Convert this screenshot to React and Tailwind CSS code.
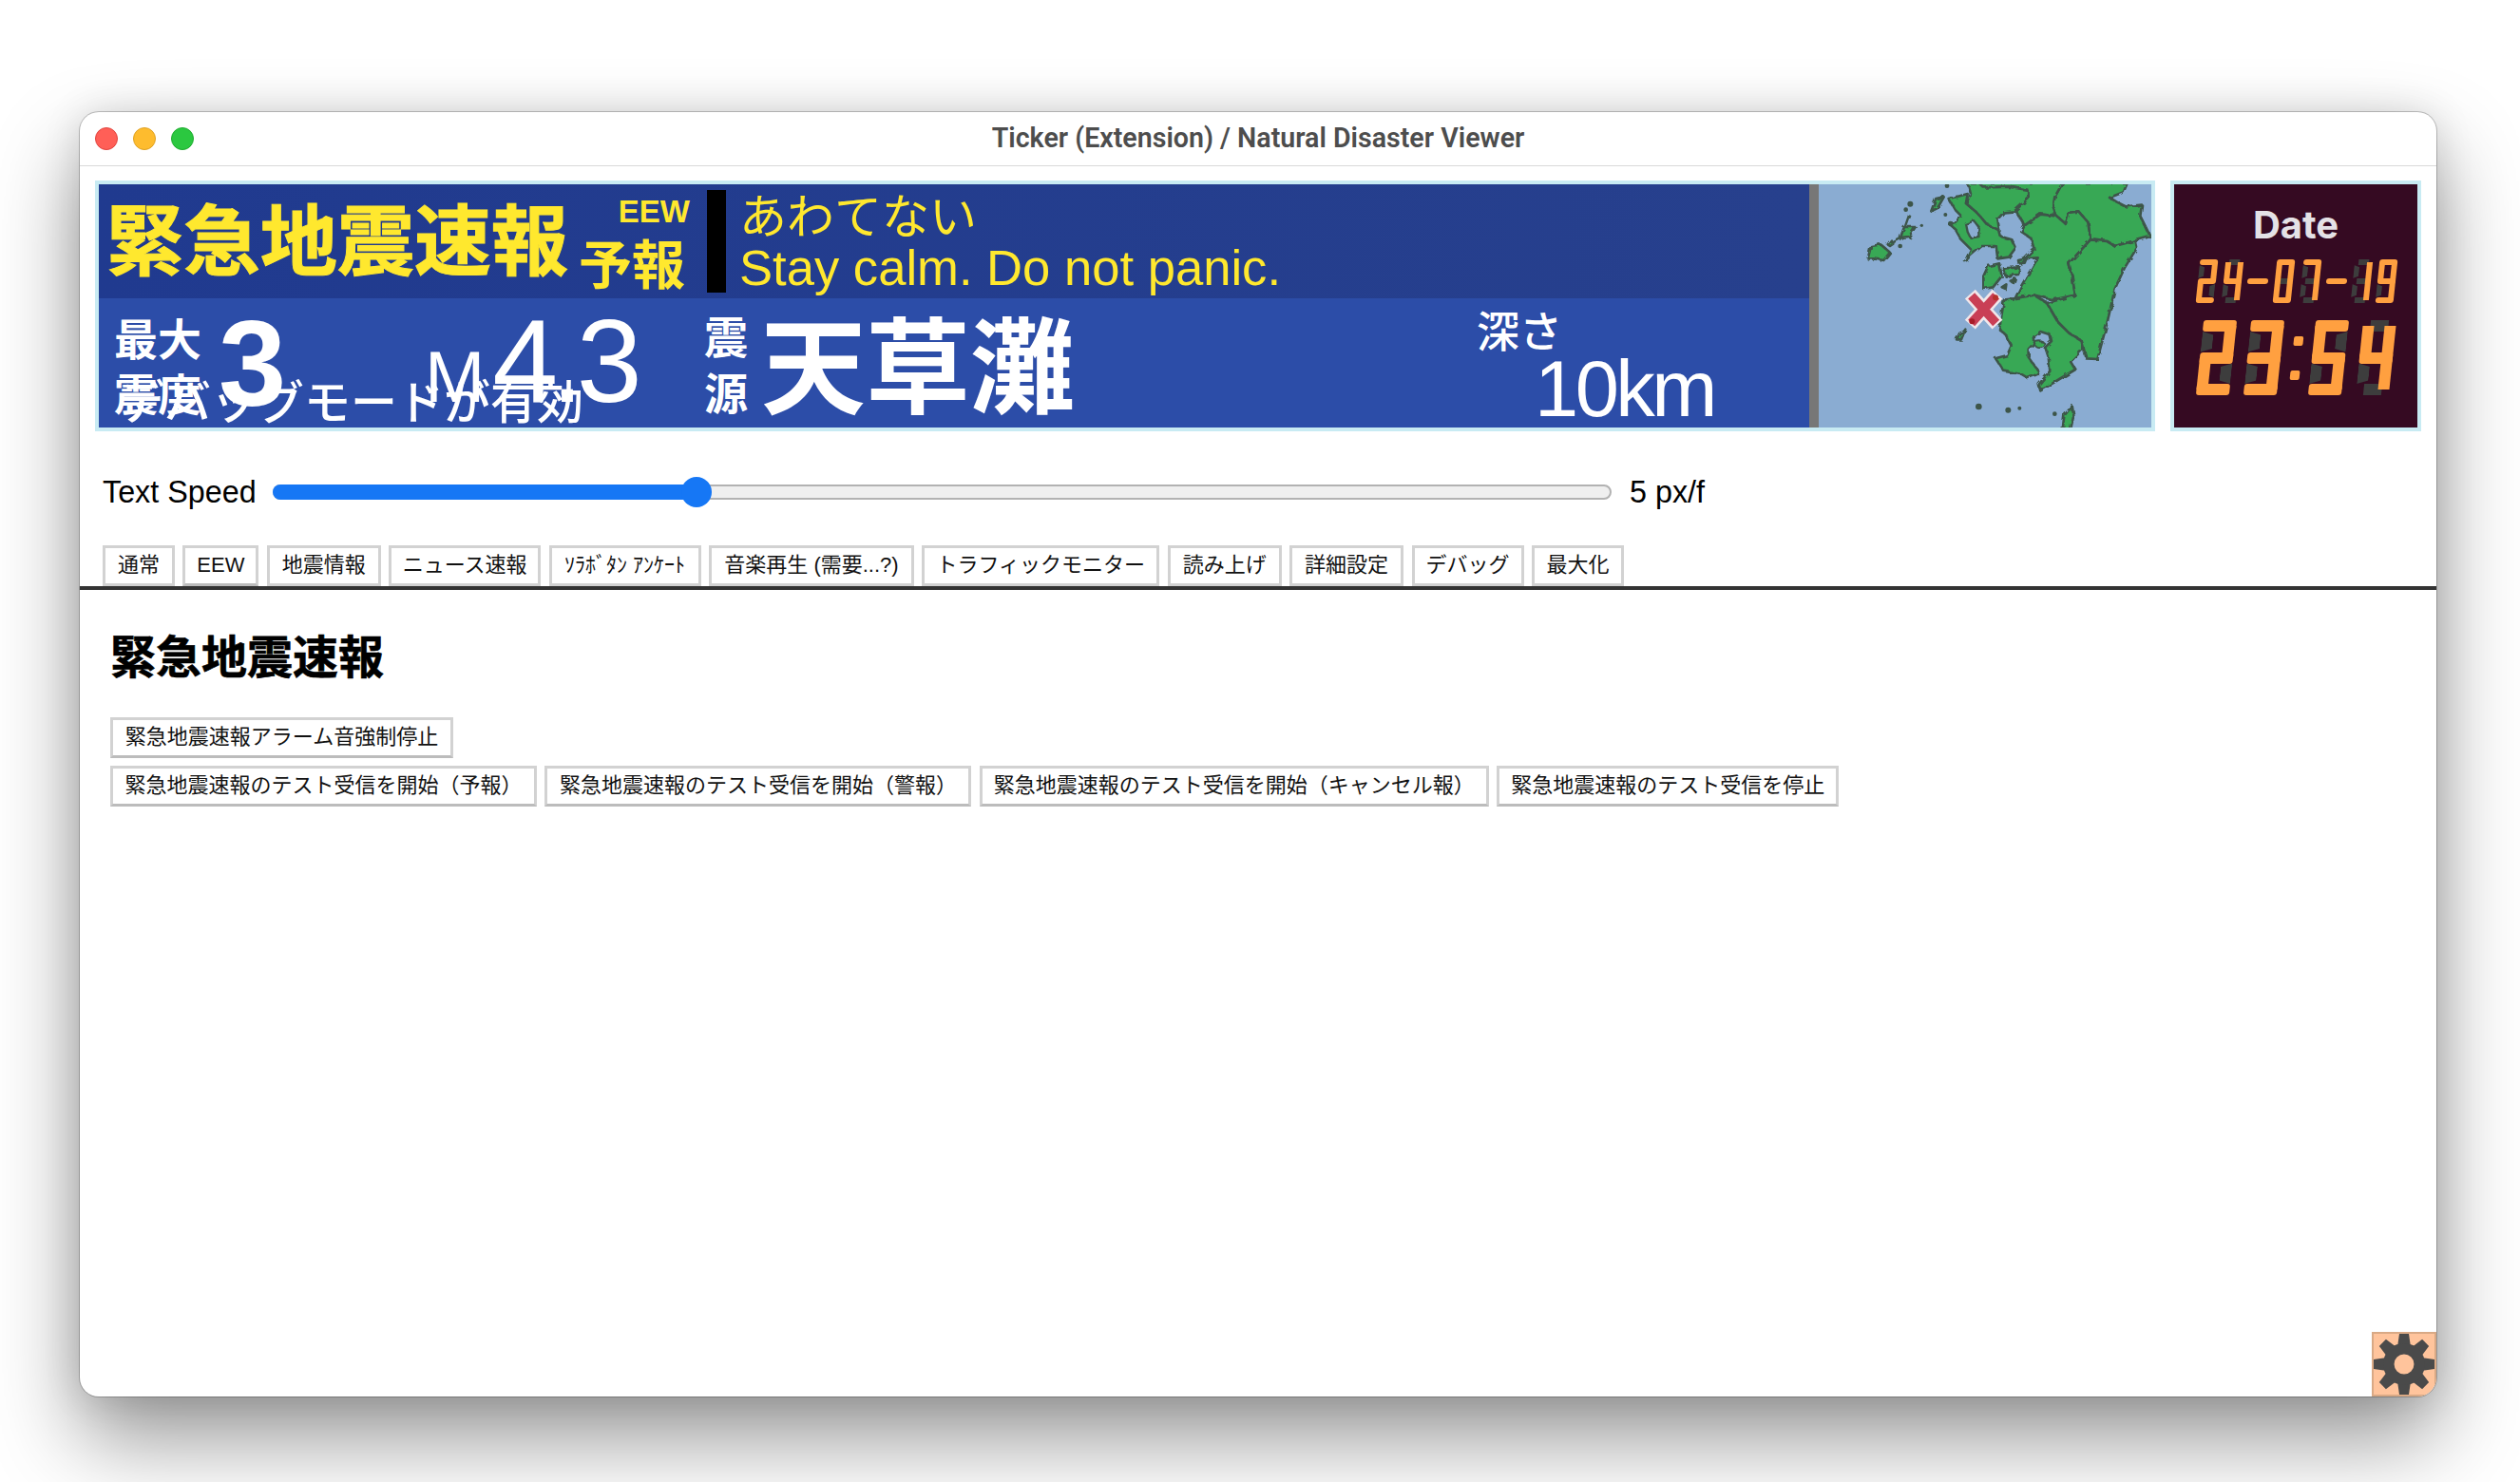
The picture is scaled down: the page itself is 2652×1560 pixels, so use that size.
import React from 'react';

const TABS = [
  { label: '通常', w: 'w-[76px]' },
  { label: 'EEW', w: 'w-[80px]', active: true },
  { label: '地震情報', w: 'w-[120px]' },
  { label: 'ニュース速報', w: 'w-[160px]' },
  { label: 'ｿﾗﾎﾞﾀﾝ ｱﾝｹｰﾄ', w: 'w-[160px]' },
  { label: '音楽再生 (需要...?)', w: 'w-[216px]' },
  { label: 'トラフィックモニター', w: 'w-[250px]' },
  { label: '読み上げ', w: 'w-[120px]' },
  { label: '詳細設定', w: 'w-[120px]' },
  { label: 'デバッグ', w: 'w-[118px]' },
  { label: '最大化', w: 'w-[97px]' },
];

// a,b,c,d,e,f,g segments
const SEGMENTS = {
  0: 'abcdef',
  1: 'bc',
  2: 'abged',
  3: 'abgcd',
  4: 'fgbc',
  5: 'afgcd',
  7: 'abc',
  9: 'abcdfg',
};

const Digit = ({ value, big }) => {
  const s = SEGMENTS[value];
  const box = big ? 'w-[35px] h-[79px]' : 'w-[19px] h-[46px]';
  const bar = (on) => `${big ? 'h-[12px]' : 'h-[6px]'} ${on ? 'bg-[#ffa040] rounded-[3px]' : `bg-[#3d3d3d] ${big ? 'mx-[8px]' : 'mx-[4px]'}`}`;
  const side = (on, clip) =>
    `${big ? 'w-[12px]' : 'w-[6px]'} ${on ? `bg-[#ffa040] relative z-10 ${big ? '-my-[6px]' : '-my-[3px]'}` : `bg-[#3d3d3d] ${clip}`}`;
  const left = '[clip-path:polygon(0_0,100%_16%,100%_84%,0_100%)]';
  const right = '[clip-path:polygon(0_16%,100%_0,100%_100%,0_84%)]';
  return (
    <div className={`flex flex-col shrink-0 ${box}`} aria-label={String(value)}>
      <div className={bar(s.includes('a'))} />
      <div className="flex-1 flex justify-between">
        <div className={side(s.includes('f'), left)} />
        <div className={side(s.includes('b'), right)} />
      </div>
      <div className={bar(s.includes('g'))} />
      <div className="flex-1 flex justify-between">
        <div className={side(s.includes('e'), left)} />
        <div className={side(s.includes('c'), right)} />
      </div>
      <div className={bar(s.includes('d'))} />
    </div>
  );
};

const Dash = () => <div className="w-[22px] h-[6px] rounded-full bg-[#ffa040] shrink-0" />;

const Clock = () => (
  <div className="w-[264px] h-[264px] border-4 border-[#c8ebf3] bg-[#350a22] flex flex-col items-center">
    <div className="mt-[23px] h-[40px] text-[40px] leading-[40px] font-bold text-[#e4e2e6] font-['Inter',sans-serif]">Date</div>
    <div className="mt-[16px] -skew-x-6 flex items-center justify-center h-[46px] w-[207px]">
      <Digit value={2} /><div className="w-[8px] shrink-0" /><Digit value={4} />
      <div className="w-[6px] shrink-0" /><Dash /><div className="w-[7px] shrink-0" />
      <Digit value={0} /><div className="w-[9px] shrink-0" /><Digit value={7} />
      <div className="w-[7px] shrink-0" /><Dash /><div className="w-[6px] shrink-0" />
      <Digit value={1} /><div className="w-[7px] shrink-0" /><Digit value={9} />
    </div>
    <div className="mt-[18px] -skew-x-6 flex items-center h-[79px] w-[203px]">
      <Digit value={2} big /><div className="w-[15px] shrink-0" /><Digit value={3} big />
      <div className="w-[33px] flex flex-col items-center gap-[26px] shrink-0">
        <div className="w-[10px] h-[10px] bg-[#ffa040] rounded-[2px]" />
        <div className="w-[10px] h-[10px] bg-[#ffa040] rounded-[2px]" />
      </div>
      <Digit value={5} big /><div className="w-[15px] shrink-0" /><Digit value={4} big />
    </div>
  </div>
);

const KyushuMap = () => {
  const land = 'fill-[#38a855] stroke-[#3d5549]';
  const water = 'fill-[#8aacd2] stroke-[#3d5549]';
  const polys = [
    // oita
    '770,-5 745,40 740,70 750,100 780,125 790,90 820,85 850,120 858,175 910,180 935,195 1000,178 1047,165 1030,130 1015,100 1020,65 970,70 940,55 918,42 962,25 975,-5',
    // fukuoka
    '505,-5 520,10 600,8 660,18 662,45 620,80 650,130 700,95 750,100 740,70 745,40 770,-5',
    // nagasaki
    '410,45 440,38 470,30 465,60 500,90 530,125 570,145 575,165 610,175 622,200 600,230 565,235 560,195 515,195 480,225 462,243 480,205 450,175 430,140 412,125 430,120 450,100 430,80',
    // saga
    '470,-5 480,30 465,60 500,90 530,125 570,145 565,110 585,88 618,85 662,45 660,18 600,8 520,10 505,-5',
    // kumamoto
    '650,130 700,95 750,100 780,125 790,90 820,85 850,120 858,175 790,250 800,290 810,350 740,365 680,350 620,360 640,320 692,232 650,235 680,205 670,170 640,150',
    // miyazaki
    '858,175 910,180 935,195 1000,178 1005,200 965,265 935,330 910,440 880,552 845,550 830,495 790,470 755,435 720,375 810,350 800,290 790,250',
    // kagoshima
    '585,365 620,360 680,350 720,375 755,435 790,470 830,495 835,520 795,560 810,585 760,615 700,652 695,632 730,590 725,545 715,515 735,495 730,475 700,465 680,480 682,500 662,520 662,545 690,585 690,600 660,612 640,600 585,590 558,550 595,540 608,510 590,475 570,458',
    // amakusa
    '520,330 520,290 535,258 570,250 578,290 550,325',
    '585,265 635,262 630,285 590,290',
    '630,240 655,235 650,248 632,250',
    '578,325 592,316 590,330',
    '605,305 620,298 615,312',
    // koshiki
    '435,490 445,470 460,465 450,490',
    // goto
    '155,235 165,195 195,190 225,215 205,240 175,235',
    '218,190 228,176 235,188 225,195',
    '258,168 270,135 305,135 285,165',
    // hirado
    '355,85 370,45 395,40 375,75',
    // tanegashima
    '770,775 775,730 800,700 805,730 795,775',
  ];
  return (
    <svg viewBox="0 0 1050 768" className="w-[350px] h-[256px] bg-[#8aacd2] blur-[0.6px] shrink-0">
      <defs>
        <filter id="rough" x="-5%" y="-5%" width="110%" height="110%">
          <feTurbulence type="fractalNoise" baseFrequency="0.05" numOctaves="2" seed="4" />
          <feDisplacementMap in="SourceGraphic" scale="14" />
        </filter>
      </defs>
      <g filter="url(#rough)">
        {polys.map((p) => (
          <polygon key={p} points={p} className={land} strokeWidth="8" strokeLinejoin="round" />
        ))}
        <polygon points="465,125 490,115 505,135 505,165 480,170 470,150" className={water} strokeWidth="7" />
        <ellipse cx="697" cy="505" rx="16" ry="9" className={land} strokeWidth="6" />
        <path d="M286 95 L272 135 M262 170 L232 185 M465 455 L455 468" stroke="#3d5549" strokeWidth="7" fill="none" />
      </g>
      {[[289, 62, 9], [275, 80, 7], [325, 130, 5], [257, 195, 7], [400, 96, 6], [405, 5, 7], [416, 124, 8], [505, 702, 10], [598, 713, 9], [634, 707, 6], [745, 725, 7]].map(([cx, cy, r]) => (
        <circle key={`${cx}-${cy}`} cx={cx} cy={cy} r={r} fill="#3d5549" />
      ))}
      <path d="M478 347 L564 443 M564 347 L478 443" stroke="#f1e7ea" strokeWidth="44" fill="none" />
      <path d="M482 352 L560 438 M560 352 L482 438" stroke="#c93f55" strokeWidth="28" fill="none" />
      <circle cx="558" cy="358" r="9" fill="#b5322c" />
      <circle cx="484" cy="433" r="9" fill="#a81c28" />
    </svg>
  );
};

const Ticker = () => (
  <div className="w-[2168px] h-[264px] border-4 border-[#c8ebf3] flex">
    <div className="w-[1800px] h-[256px] flex flex-col font-['Liberation_Sans','Noto_Sans_CJK_JP',sans-serif]">
      <div className="h-[120px] bg-linear-to-r from-[#203a8f] to-[#27408d] flex items-center pl-[8px] text-[#ffe82e] font-['Noto_Sans_CJK_JP',sans-serif]">
        <div className="w-[492px] mb-[14px] text-[81px] leading-none font-bold whitespace-nowrap [-webkit-text-stroke:1px_#ffe82e]">緊急地震速報</div>
        <div className="ml-[6px] w-[116px] flex flex-col items-end">
          <div className="text-[33px] leading-[34px] font-bold font-['Liberation_Sans',sans-serif]">EEW</div>
          <div className="mt-[7px] mr-[5px] text-[56px] leading-none font-bold whitespace-nowrap">予報</div>
        </div>
        <div className="ml-[18px] w-[20px] h-[108px] bg-black" />
        <div className="ml-[14px] flex flex-col">
          <div className="-mt-[2px] text-[50px] leading-[56px] whitespace-nowrap">あわてない</div>
          <div className="mt-[2px] text-[52.6px] leading-[56px] whitespace-nowrap font-['Liberation_Sans',sans-serif]">Stay calm. Do not panic.</div>
        </div>
      </div>
      <div className="relative h-[136px] bg-[#2c4da8] flex text-white pl-[16px]">
        <div className="w-[110px] pt-[11px] text-[46px] leading-[58px] font-bold font-['Noto_Sans_CJK_JP',sans-serif]">
          <div>最大</div>
          <div>震度</div>
        </div>
        <div className="w-[217px] pt-[1px] text-[128px] leading-[136px] font-bold">3</div>
        <div className="w-[294px] flex items-baseline pt-[2px]">
          <span className="text-[76px] leading-[128px]">M</span>
          <span className="ml-[8px] text-[124px] leading-[128px] tracking-[-7.5px]">4.3</span>
        </div>
        <div className="w-[60px] pt-[9px] text-[46px] leading-[59px] font-bold font-['Noto_Sans_CJK_JP',sans-serif]">
          <div>震</div>
          <div>源</div>
        </div>
        <div className="w-[753px] pt-[10px] text-[110px] leading-[110px] font-bold font-['Noto_Sans_CJK_JP',sans-serif]">天草灘</div>
        <div className="flex flex-col">
          <div className="pt-[8px] text-[45px] leading-[50px] font-medium font-['Noto_Sans_CJK_JP',sans-serif]">深さ</div>
          <div className="ml-[61px] text-[83px] leading-[76px] tracking-[-3.5px] whitespace-nowrap">10km</div>
        </div>
        <div className="absolute left-[20px] top-[78px] text-[49px] leading-[56px] whitespace-nowrap text-white font-medium font-['Noto_Sans_CJK_JP',sans-serif]">デバッグモードが有効</div>
      </div>
    </div>
    <div className="w-[10px] bg-[#777777] shrink-0" />
    <KyushuMap />
  </div>
);

const Button = ({ children, className }) => (
  <button className={`h-[43px] pb-[2px] border-[3px] border-[#d2d2d2] border-b-[#bcbcbc] bg-white text-[22px] leading-none text-[#111111] whitespace-nowrap flex items-center justify-center shrink-0 ${className}`}>
    {children}
  </button>
);

const Gear = () => (
  <svg viewBox="-32 -32 64 64" className="w-[64px] h-[64px]">
    {[0, 45, 90, 135, 180, 225, 270, 315].map((a) => (
      <path key={a} d="M-5 -32 H5 L7 -18 H-7 Z" fill="#4a4a4a" transform={`rotate(${a})`} />
    ))}
    <circle r="16.2" fill="none" stroke="#4a4a4a" strokeWidth="11.5" />
  </svg>
);

export default function App() {
  return (
    <div className="w-[2652px] h-[1560px] bg-white pt-[118px] pl-[84px] overflow-hidden font-['Liberation_Sans','Noto_Sans_CJK_JP',sans-serif]">
      <div className="relative w-[2480px] h-[1352px] bg-white rounded-[20px] overflow-hidden flex flex-col shadow-[0_0_0_1px_rgba(0,0,0,0.22),0_44px_90px_rgba(0,0,0,0.42),0_0_40px_rgba(0,0,0,0.12)]">
        <div className="h-[57px] border-b border-[#d9d9d9] shrink-0 flex items-center relative">
          <div className="flex gap-[16px] pl-[16px]">
            <div className="w-[24px] h-[24px] rounded-full bg-[#ff5f57] border border-[#e0443e]" />
            <div className="w-[24px] h-[24px] rounded-full bg-[#febc2e] border border-[#dea123]" />
            <div className="w-[24px] h-[24px] rounded-full bg-[#2bc840] border border-[#1eab2e]" />
          </div>
          <div className="absolute inset-x-0 -mt-[2px] text-center text-[28.6px] font-semibold text-[#4d4d4d] font-['Roboto',sans-serif]">
            Ticker (Extension) / Natural Disaster Viewer
          </div>
        </div>

        <div className="flex gap-[16px] pl-[16px] pt-[15px]">
          <Ticker />
          <Clock />
        </div>

        <div className="flex items-center h-[40px] mt-[44px] pl-[24px] text-[32.3px] leading-none text-black">
          <span className="w-[179px] whitespace-nowrap">Text Speed</span>
          <div className="w-[1409px] h-[16px] rounded-full bg-[#efefef] border-2 border-[#b2b2b2] flex items-center">
            <div className="w-[446px] h-[16px] -ml-[2px] rounded-l-full bg-[#1677f5] shrink-0" />
            <div className="w-[32px] h-[32px] -ml-[16px] rounded-full bg-[#1677f5] shrink-0" />
          </div>
          <span className="ml-[19px] whitespace-nowrap">5 px/f</span>
        </div>

        <div className="flex items-center gap-[8.4px] h-[43px] mt-[36px] pl-[24px]">
          {TABS.map((t) => (
            <Button key={t.label} className={`${t.w} ${t.active ? 'h-[36px]' : 'border-b-[#d2d2d2]'}`}>{t.label}</Button>
          ))}
        </div>
        <div className="h-[4px] bg-[#333333] shrink-0" />

        <div className="pl-[32px]">
          <h2 className="mt-[35px] h-[64px] text-[48px] leading-[64px] font-bold text-black [-webkit-text-stroke:0.6px_black] font-['Noto_Sans_CJK_JP',sans-serif]">緊急地震速報</h2>
          <div className="mt-[35px] flex gap-[8.4px]">
            <Button className="w-[361px]">緊急地震速報アラーム音強制停止</Button>
          </div>
          <div className="mt-[8px] flex gap-[8.4px]">
            <Button className="w-[449px]">緊急地震速報のテスト受信を開始（予報）</Button>
            <Button className="w-[449px]">緊急地震速報のテスト受信を開始（警報）</Button>
            <Button className="w-[536px]">緊急地震速報のテスト受信を開始（キャンセル報）</Button>
            <Button className="w-[360px]">緊急地震速報のテスト受信を停止</Button>
          </div>
        </div>

        <div className="absolute right-0 bottom-0 w-[68px] h-[68px] bg-[#ffc49c] border-2 border-[#d9a985] flex items-center justify-center">
          <Gear />
        </div>
      </div>
    </div>
  );
}
